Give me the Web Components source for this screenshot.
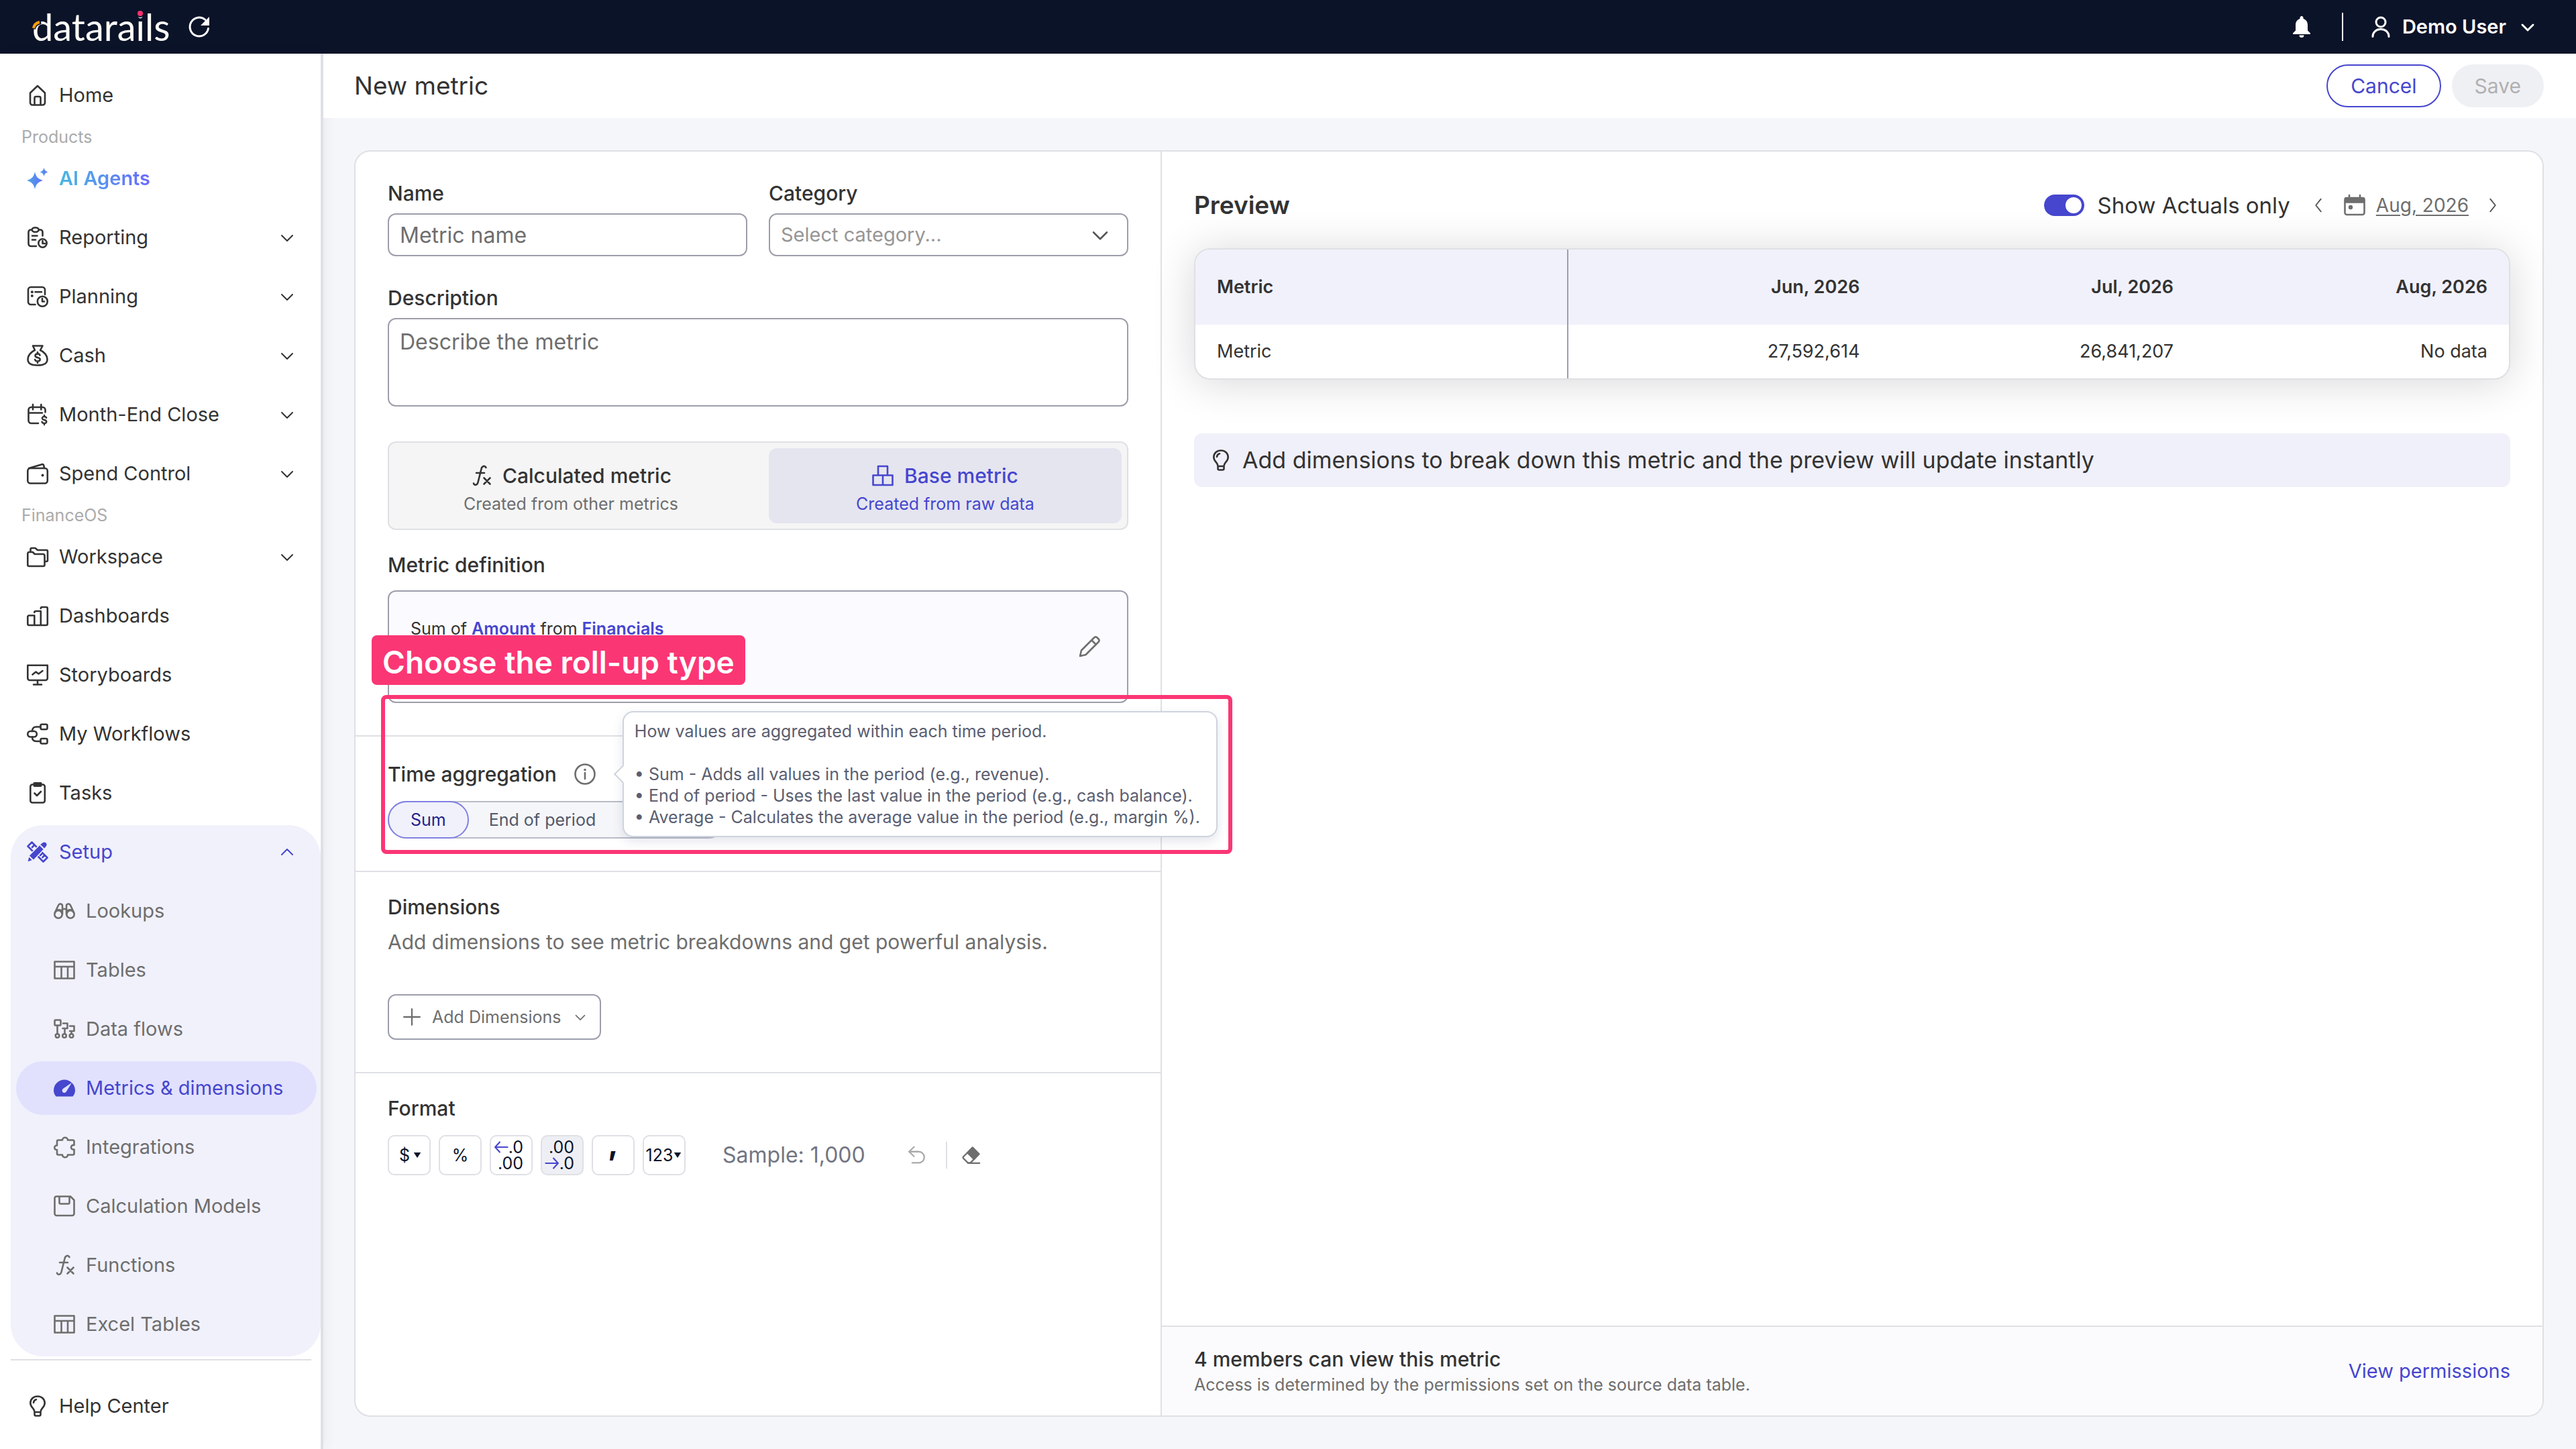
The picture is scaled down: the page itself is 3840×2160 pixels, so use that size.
<!DOCTYPE html>
<html lang="en">
<head>
<meta charset="utf-8">
<title>New metric</title>
<style>
body {
    margin: 0;
    font-family: Inter, "Open Sans", sans-serif;
    font-size: 29px;
    line-height: 40px;
    color: #333333;
    --accent: #4646ce;
    --line: #dfe0e5;
    --field: #9c9eab;
    --muted: #6e6e6e;
}
</style>
</head>
<body>
<app-shell>
    <top-bar slot="top">Demo User</top-bar>
    <side-nav slot="side"></side-nav>
    <page-header>New metric</page-header>
    <metric-card>
        <metric-form slot="form"></metric-form>
        <metric-preview slot="preview"></metric-preview>
    </metric-card>
</app-shell>

<script>
const dollar = "M3.5-3.4C3-5 1.6-5.6 0-5.6c-2 0-3.5 1-3.5 2.8C-3.5 1 3.7-1 3.7 2.8 3.7 4.6 2 5.6 0 5.6c-2 0-3.4-.9-3.9-2.6M0-8v2.4M0 5.6V8";

const icons = {
    home: `<path d="M5 12.500 16 2l11 10.500V27a3.500 3.500 0 0 1-3.500 3.500h-15A3.500 3.500 0 0 1 5 27z"/><path d="M11.500 30V20a2 2 0 0 1 2-2h5a2 2 0 0 1 2 2v10"/>`,
    ai: `<g fill="url(#g)" stroke="none"><path d="M12 6c1.500 7.500 4.500 10.500 12 13-7.500 2.500-10.500 5.500-12 13-1.500-7.500-4.500-10.500-12-13 7.500-2.500 10.500-5.500 12-13z"/><path d="M25.500 0c.8 3.800 2.500 5.200 6 6.500-3.500 1.300-5.200 2.700-6 6.500-.8-3.800-2.500-5.200-6-6.500 3.500-1.300 5.200-2.700 6-6.500z"/></g><defs><linearGradient id="g"><stop stop-color="#4aa6e6"/><stop offset="1" stop-color="#6570f8"/></linearGradient></defs>`,
    reporting: `<path d="M7.500 4.500H6A3.500 3.500 0 0 0 2.500 8v17.500A3.500 3.500 0 0 0 6 29h8M18 4.500h2A3.500 3.500 0 0 1 23.500 8v5.500"/><ellipse cx="12.700" cy="4.500" rx="5" ry="3.300"/><path d="M8 13.500h7.500M8 19.500h5M23.500 21v4h4"/><circle cx="23.500" cy="24.500" r="6.200"/>`,
    planning: `<path d="M12.500 28H6a4 4 0 0 1-4-4V6a4 4 0 0 1 4-4h17a4 4 0 0 1 4 4v7"/><path d="M12.500 9.300H22M23 19v4.500h3"/><circle cx="23.300" cy="23.300" r="7.500"/><g fill="currentColor" stroke="none"><circle cx="7.800" cy="9.300" r="2"/><circle cx="7.800" cy="15" r="2"/></g>`,
    cash: `<path d="M9 1.500h14.500L20 8c6 2.500 10.500 8 10.500 13.500C30.500 28 26 30.500 16 30.500S1.500 28 1.500 21.500C1.500 16 6 10.500 12 8z"/><path transform="translate(16 19)" d="${dollar}"/>`,
    month: `<path d="M17 29H6.500a4 4 0 0 1-4-4V9a4 4 0 0 1 4-4h17a4 4 0 0 1 4 4v3.500M3 13.500h20M9 1v7.500M21.300 1v7.500"/><path transform="translate(26 24) scale(.9)" d="${dollar}"/>`,
    spend: `<rect x="1.300" y="8" width="29.500" height="22.500" rx="4"/><path d="M3 8 22.500 2.200c1.500-.4 2.500.3 2.700 1.500L26 8"/><circle cx="23.500" cy="18.500" r="2" fill="currentColor" stroke="none"/>`,
    workspace: `<path d="M1.300 11A2 2 0 0 1 3.300 9h5.500l3 3H24a2.500 2.500 0 0 1 2.500 2.500V28a2 2 0 0 1-2 2H3.300a2 2 0 0 1-2-2z"/><path d="M5.500 8.500V5a2 2 0 0 1 2-2h5l3.500 3h13a2 2 0 0 1 2 2v13a2 2 0 0 1-2 2h-2"/>`,
    dashboards: `<path d="M1.300 17.500a2 2 0 0 1 2-2h8V30h-8a2 2 0 0 1-2-2zM11.300 11a2 2 0 0 1 2-2h7.500v21h-9.500M20.800 5a2 2 0 0 1 2-2h6a2 2 0 0 1 2 2v23a2 2 0 0 1-2 2h-8"/>`,
    storyboards: `<path d="M1.300 1.800h29.500V21a3 3 0 0 1-3 3H4.300a3 3 0 0 1-3-3zM16 24v6M10 30.500h12M8.500 15.500l5-4 4 3 6-4.500"/>`,
    workflows: `<rect x="1.300" y="12" width="13.500" height="8.500" rx="4"/><rect x="20.500" y="1.800" width="10" height="7.500" rx="2"/><rect x="20.500" y="23" width="10" height="7.500" rx="2"/><path d="M8 12c0-4 2-6.500 6-6.500h6.500M8 20.500c0 4 2 6.500 6 6.500h6.500"/>`,
    tasks: `<rect x="5.300" y="3.500" width="21.500" height="27" rx="3"/><path d="M11 0h10a1.500 1.500 0 0 1 1.500 1.500V5a2 2 0 0 1-2 2h-9a2 2 0 0 1-2-2V1.500A1.500 1.500 0 0 1 11 0z" fill="currentColor" stroke="none"/><path d="m11.500 16.500 3.500 3.500 6-6"/>`,
    setup: `<path d="M1.500 7.500 7.500 1.500 30.500 24.500l-6 6zM8 9l3-3M13 13l2-2M20 21l2-2M23.500 24l3-3"/><path d="M.5 31.500 3 21.500 21.500 3c3-3 5.500-3 7.500-1s2 4.500-1 7.500L10.500 28z" fill="currentColor" stroke="#f1f1fb" stroke-width="1.500"/><path d="m20.500 6.500 5 5M3.500 22.500l6 6" stroke="#f1f1fb" stroke-width="2"/>`,
    lookups: `<circle cx="7" cy="21" r="5.700"/><circle cx="25" cy="21" r="5.700"/><path d="M1.800 18.500 7 7.500c1.500-3 6-2.800 6 1V21M30.200 18.500 25 7.500c-1.500-3-6-2.800-6 1V21M13 13h6M3.500 15.500c3-2 7-1.500 9 1M28.500 15.500c-3-2-7-1.500-9 1"/>`,
    table: `<path d="M1.500 3.500h29v25h-29zM1.500 11h29M11.500 11v17.500M21 11v17.500"/>`,
    flows: `<rect x="1.500" y="2.500" width="9" height="8" rx="1"/><circle cx="5.500" cy="26" r="2.800"/><circle cx="16" cy="26" r="2.800"/><circle cx="26.500" cy="26" r="2.800"/><path d="M5.500 11v12M14 7.500h6.500v7.500h-7M16.500 15v8M24 11.500h6.500v7.500h-6.500M26.500 19v4"/>`,
    gauge: `<path fill="currentColor" stroke="none" fill-rule="evenodd" d="M3.500 28.500C1 25.500 0 22.500 0 19.500a16 16 0 0 1 32 0c0 3-1 6-3.500 9zM27 8 14.500 16.500c-2.200 1.500-2.400 4-1 5.500s4 1.200 5.300-.8z"/>`,
    puzzle: `<path d="M5 7.500a2 2 0 0 1 2-2h6c0-5 8-5 8 0h7.500a2 2 0 0 1 2 2V13c-6-1-6 7.500 0 6.500v6a2 2 0 0 1-2 2H21c0 5-8 5-8 0H7a2 2 0 0 1-2-2v-5.500c-5 .5-5-7 0-6.500z"/>`,
    save: `<path d="M4 1.500h21l5.500 5.500v20a3 3 0 0 1-3 3H4.500a3 3 0 0 1-3-3v-23A2.500 2.500 0 0 1 4 1.500zM8.500 2v9a1.500 1.500 0 0 0 1.500 1.500h12a1.500 1.500 0 0 0 1.500-1.500V2"/>`,
    fx: `<path d="M5 27.500c1 3.500 5.500 3 6.500-1.500L16.500 6c1-4.500 5-5.500 7-2M9 12h12M20.500 19.500l9 9M29.500 19.500l-9 9"/>`,
    bulb: `<path d="M11.500 24.500c0-5-6.200-6.500-6.200-13C5.300 5.500 10 1.500 16 1.500s10.700 4 10.700 10c0 6.500-6.200 8-6.200 13v4a2 2 0 0 1-2 2h-5a2 2 0 0 1-2-2zM11.500 25h9M10 11c.2-2.500 1.700-4.300 4-4.800"/>`,
    boxes: `<path d="M9 2h14v13.500H9zM1.500 15.500H16V30H1.500zM16 15.500h14.500V30H16z"/>`,
    down: `<path d="m8 13 8 8 8-8"/>`,
    up: `<path d="m8 20 8-8 8 8"/>`,
    left: `<path d="m20 6-8 10 8 10"/>`,
    right: `<path d="m12 6 8 10-8 10"/>`,
    bell: `<path fill="currentColor" stroke="none" d="M16 0c1.500 0 2.500 1 2.500 2.400V4C22.500 5 25 8.700 25 13v8.500l4 4V27H3v-1.500l4-4V13c0-4.300 2.500-8 6.500-9V2.400C13.500 1 14.500 0 16 0zM12.500 28.500h7a3.500 3.500 0 0 1-7 0z"/>`,
    user: `<circle cx="16" cy="9" r="7"/><path d="M4 30.500C4 24 9 19.500 16 19.500S28 24 28 30.500"/>`,
    reload: `<path d="M29.500 18.500A13.800 14 0 1 1 25 5.500"/><path fill="currentColor" stroke="none" d="M31 1v13H18z"/>`,
    pencil: `<path d="m2 30 2-8.500L23 2.500c1.500-1.500 3-1.500 4.500 0l2 2c1.500 1.500 1.500 3 0 4.500L10.500 28zM19.500 6.500l6 6"/>`,
    info: `<circle cx="16" cy="16" r="14.500"/><path d="M16 14v9"/><circle cx="16" cy="9.500" r="1.800" fill="currentColor" stroke="none"/>`,
    calendar: `<path d="M1.500 12V8a3 3 0 0 1 3-3h23a3 3 0 0 1 3 3v19a3 3 0 0 1-3 3h-23a3 3 0 0 1-3-3z"/><path fill="currentColor" d="M2 5.500h28v6H2zM8 1v5M24 1v5"/><circle cx="10" cy="19" r="3.200" fill="currentColor" stroke="none"/>`,
    plus: `<path d="M16 2.500v27M2.500 16h27"/>`,
    undo: `<path d="M12 2 3.500 10l8.500 8M4 10h16a9 9 0 0 1 0 19h-11"/>`,
    eraser: `<path d="M10 29 2.500 21.500a2 2 0 0 1 0-3L18 3l11 11-14.500 15zM10 29.500h20"/><path fill="currentColor" d="M18 3l11 11-8.500 9-11-11z"/>`,
    caret: `<path fill="currentColor" stroke="none" d="M4 7h24L16 25z"/>`,
    arrowleft: `<path d="M30 16H3M13 5 3 16l10 11"/>`,
    arrowright: `<path d="M2 16h27M19 5l10 11-10 11"/>`
};

function define(name, html) {
    let t = document.createElement("template");
    t.innerHTML = html;
    customElements.define(name, class extends HTMLElement {
        constructor() {
            super();
            this.attachShadow({mode: "open"}).appendChild(t.content.cloneNode(true));
        }
    });
}

class AppIcon extends HTMLElement {
    constructor() {
        super();
        this.attachShadow({mode: "open"});
    }
    connectedCallback() {
        this.shadowRoot.innerHTML = `
<style>
:host { display: block; flex: none; width: 32px; height: 32px; }
svg {
    display: block;
    width: 100%;
    height: 100%;
    overflow: visible;
    fill: none;
    stroke: currentColor;
    stroke-width: var(--stroke, 2.6);
    stroke-linecap: round;
    stroke-linejoin: round;
}
</style>
<svg viewBox="0 0 32 32" aria-hidden="true">${icons[this.getAttribute("name")]}</svg>`;
    }
}
customElements.define("app-icon", AppIcon);

// One sidebar row. Attributes: icon, chevron (up/down), sub, active, open, ai.
class NavItem extends HTMLElement {
    constructor() {
        super();
        this.attachShadow({mode: "open"});
    }
    connectedCallback() {
        let chevron = this.getAttribute("chevron");
        this.shadowRoot.innerHTML = `
<style>
:host { display: block; }
a {
    display: flex;
    align-items: center;
    gap: 16px;
    height: 80px;
    padding: 0 34px 0 40px;
    color: inherit;
    text-decoration: none;
}
span { flex: 1; white-space: nowrap; }
.chevron { --stroke: 2; }
:host([open]) a { padding-left: 24px; color: var(--accent); }
:host([sub]) a { margin: 0 6px 0 8px; padding: 0 0 0 56px; border-radius: 40px; color: var(--muted); }
:host([sub][active]) a { background: #e1e1fe; color: var(--accent); }
:host([ai]) span {
    flex: none;
    font-weight: 600;
    color: transparent;
    background: linear-gradient(90deg, #4ab8e0, #6a68ff);
    background-clip: text;
}
</style>
<a href="#">
    <app-icon name="${this.getAttribute("icon")}"></app-icon>
    <span><slot></slot></span>
    ${chevron ? `<app-icon class="chevron" name="${chevron}"></app-icon>` : ""}
</a>`;
    }
}
customElements.define("nav-item", NavItem);

define("app-shell", `
<style>
:host {
    display: grid;
    grid-template: auto 1fr / 482px minmax(0, 1fr);
    min-height: 100vh;
    background: #f5f6f9;
}
.top { grid-column: 1 / -1; }
main { display: flex; flex-direction: column; }
</style>
<div class="top"><slot name="top"></slot></div>
<slot name="side"></slot>
<main><slot></slot></main>
`);

define("top-bar", `
<style>
:host {
    display: flex;
    align-items: center;
    height: 80px;
    padding: 0 56px 0 48px;
    background: #0b1329;
    color: #ffffff;
}
.logo {
    position: relative;
    margin-right: 28px;
    color: #fdfdf6;
    font: 400 56px/72px Lato, sans-serif;
}
.logo i { position: relative; font-style: normal; }
.logo i::after {
    content: "";
    position: absolute;
    left: 50%;
    top: 10px;
    width: 8px;
    height: 8px;
    margin-left: -4px;
    border-radius: 50%;
    background: #ff2e6e;
    box-shadow: 0 0 0 2px #0b1329;
}
.logo svg { position: absolute; left: 0; top: 26px; width: 14px; height: 14px; }
.space { flex: 1; }
button {
    display: flex;
    align-items: center;
    gap: 16px;
    padding: 0;
    border: none;
    background: none;
    color: inherit;
    font: 600 29px/40px Inter, sans-serif;
    --stroke: 3;
}
.user { margin-left: 40px; }
hr { width: 2px; height: 42px; margin: 0 0 0 44px; border: none; background: #ffffff; }
</style>
<div class="logo">datara<i>i</i>ls<svg viewBox="0 0 14 14"><path d="M1 13C2 8 6 3 13 2" fill="none" stroke="#0b1329" stroke-width="8"/><path d="M2 12C3 7 6 4 11 3" fill="none" stroke="#ff9f0f" stroke-width="4"/></svg></div>
<button aria-label="Reload"><app-icon name="reload"></app-icon></button>
<div class="space"></div>
<button aria-label="Notifications"><app-icon name="bell"></app-icon></button>
<hr>
<button class="user"><app-icon name="user"></app-icon><slot></slot><app-icon name="down"></app-icon></button>
`);

define("side-nav", `
<style>
:host {
    display: block;
    padding-top: 22px;
    border-right: 4px solid var(--line);
    background: #ffffff;
    box-shadow: 4px 0 16px rgba(40, 50, 100, 0.05);
}
h2 { margin: 0; padding-left: 32px; font-size: 25px; line-height: 44px; font-weight: 400; color: #ababab; }
.rows { display: flex; flex-direction: column; gap: 8px; }
.setup { margin: 8px 0 4px 16px; padding-bottom: 8px; border-radius: 48px; background: #f1f1fb; }
.help { margin: 0 14px 0 16px; padding: 28px 0 20px; border-top: 2px solid var(--line); }
.help nav-item { margin-left: -16px; }
</style>
<nav>
    <nav-item icon="home">Home</nav-item>
    <h2>Products</h2>
    <div class="rows">
        <nav-item icon="ai" ai>AI Agents</nav-item>
        <nav-item icon="reporting" chevron="down">Reporting</nav-item>
        <nav-item icon="planning" chevron="down">Planning</nav-item>
        <nav-item icon="cash" chevron="down">Cash</nav-item>
        <nav-item icon="month" chevron="down">Month-End Close</nav-item>
        <nav-item icon="spend" chevron="down">Spend Control</nav-item>
    </div>
    <h2>FinanceOS</h2>
    <div class="rows">
        <nav-item icon="workspace" chevron="down">Workspace</nav-item>
        <nav-item icon="dashboards">Dashboards</nav-item>
        <nav-item icon="storyboards">Storyboards</nav-item>
        <nav-item icon="workflows">My Workflows</nav-item>
        <nav-item icon="tasks">Tasks</nav-item>
    </div>
    <div class="rows setup">
        <nav-item icon="setup" chevron="up" open>Setup</nav-item>
        <nav-item icon="lookups" sub>Lookups</nav-item>
        <nav-item icon="table" sub>Tables</nav-item>
        <nav-item icon="flows" sub>Data flows</nav-item>
        <nav-item icon="gauge" sub active>Metrics &amp; dimensions</nav-item>
        <nav-item icon="puzzle" sub>Integrations</nav-item>
        <nav-item icon="save" sub>Calculation Models</nav-item>
        <nav-item icon="fx" sub>Functions</nav-item>
        <nav-item icon="table" sub>Excel Tables</nav-item>
    </div>
    <div class="help"><nav-item icon="bulb">Help Center</nav-item></div>
</nav>
`);

define("page-header", `
<style>
:host {
    display: flex;
    align-items: center;
    gap: 16px;
    height: 96px;
    padding: 0 48px 0 46px;
    background: #ffffff;
}
h1 { flex: 1; margin: 0; font-size: 37px; font-weight: 400; }
button {
    height: 64px;
    padding: 0 34px;
    border: 2px solid var(--accent);
    border-radius: 32px;
    background: #ffffff;
    color: var(--accent);
    font: inherit;
    font-size: 30px;
}
button:disabled { padding: 0 32px; border-color: #eff0f4; background: #eff0f4; color: #b0b0b2; }
</style>
<h1><slot></slot></h1>
<button>Cancel</button>
<button disabled>Save</button>
`);

define("metric-card", `
<style>
:host {
    flex: 1;
    display: grid;
    grid-template-columns: minmax(0, 1202fr) minmax(0, 2058fr);
    margin: 48px 48px 48px 46px;
    border: 2px solid var(--line);
    border-radius: 24px;
    background: #ffffff;
}
</style>
<slot name="form"></slot>
<slot name="preview"></slot>
`);

define("info-tip", `
<style>
:host { position: relative; display: block; color: #6e6e6e; }
.tip {
    position: absolute;
    left: 72px;
    top: -78px;
    padding: 12px 24px 12px 16px;
    border: 2px solid #ced4dd;
    border-radius: 16px;
    background: #ffffff;
    box-shadow: 0 6px 16px rgba(60, 70, 110, 0.14);
    color: #5b5e70;
    font-size: 25px;
    line-height: 32px;
    white-space: pre;
}
.tip::before {
    content: "";
    position: absolute;
    left: -11px;
    top: 82px;
    width: 18px;
    height: 18px;
    border: solid #ced4dd;
    border-width: 0 0 2px 2px;
    background: #ffffff;
    transform: rotate(45deg);
}
</style>
<app-icon name="info"></app-icon>
<div class="tip" role="tooltip"><slot></slot></div>
`);

define("call-out", `
<style>
:host { position: absolute; inset: -62px -107px 25px 38px; border: 6px solid #fb3675; border-radius: 8px; pointer-events: none; }
div {
    position: absolute;
    left: -20px;
    top: -95px;
    padding: 12px 16px 6px;
    border-radius: 8px;
    background: #fb3675;
    color: #ffffff;
    font-size: 46px;
    line-height: 56px;
    font-weight: 600;
    white-space: nowrap;
}
</style>
<div><slot></slot></div>
`);

define("format-bar", `
<style>
:host { display: flex; align-items: center; gap: 12px; margin-top: 20px; }
button {
    display: flex;
    align-items: center;
    justify-content: center;
    width: 64px;
    height: 60px;
    padding: 0;
    border: 2px solid var(--line);
    border-radius: 10px;
    background: #ffffff;
    color: #0b1329;
    font: 25px/24px Inter, sans-serif;
}
button.on { background: #eeeff5; }
button app-icon { width: 14px; height: 14px; }
.money { gap: 4px; padding-left: 4px; }
.stack { flex-direction: column; align-items: flex-end; padding-right: 12px; }
.stack span { display: flex; align-items: center; }
.stack app-icon { width: 22px; height: 22px; color: var(--accent); --stroke: 3; }
.comma { font-size: 46px; font-weight: 700; line-height: 24px; padding-bottom: 36px; }
output { margin-left: 43px; color: #727582; font-size: 32px; }
.tool { width: 32px; border: none; color: var(--muted); }
.tool app-icon { width: 28px; height: 28px; }
.tool:disabled { margin-left: 48px; color: #aaaaaa; }
hr { width: 2px; height: 40px; margin: 0 8px 0 16px; border: none; background: var(--line); }
</style>
<button class="money" aria-label="Currency">$<app-icon name="caret"></app-icon></button>
<button>%</button>
<button class="stack" aria-label="Increase decimals"><span><app-icon name="arrowleft"></app-icon>.0</span><span>.00</span></button>
<button class="stack on" aria-label="Decrease decimals"><span>.00</span><span><app-icon name="arrowright"></app-icon>.0</span></button>
<button class="comma" aria-label="Thousands separator">,</button>
<button aria-label="Number scale">123<app-icon name="caret"></app-icon></button>
<output>Sample: 1,000</output>
<button class="tool" disabled aria-label="Undo"><app-icon name="undo"></app-icon></button>
<hr>
<button class="tool" aria-label="Clear format"><app-icon name="eraser"></app-icon></button>
`);

define("metric-form", `
<style>
:host { display: block; position: relative; z-index: 1; border-right: 2px solid var(--line); }
* { box-sizing: border-box; }
section { padding: 32px 48px 48px; border-bottom: 2px solid var(--line); }
section:last-child { border-bottom: none; }
section.basics { padding-top: 42px; }
section.time { position: relative; padding-top: 36px; }
fieldset { display: contents; }
label, h3 { display: block; margin: 0; font-size: 30px; line-height: 40px; font-weight: 500; }
.fields { display: grid; grid-template-columns: 1fr 1fr; gap: 42px 32px; }
.wide { grid-column: 1 / -1; }
input[type=text], select, textarea {
    display: block;
    width: 100%;
    height: 64px;
    margin-top: 10px;
    padding: 0 16px;
    border: 2px solid var(--field);
    border-radius: 12px;
    background: #ffffff;
    color: var(--muted);
    font: 32px/40px Inter, sans-serif;
}
textarea { height: 132px; padding: 14px 16px; resize: none; }
::placeholder { color: var(--muted); opacity: 1; }
.select { display: grid; align-items: center; }
.select > * { grid-area: 1 / 1; }
.select select { appearance: none; color: #969696; font-size: 29px; }
.select app-icon { justify-self: end; margin: 10px 22px 0 0; color: #555555; pointer-events: none; width: 40px; height: 40px; --stroke: 2; }
.kinds {
    display: grid;
    grid-template-columns: 1fr 1fr;
    gap: 32px;
    margin: 52px 0 32px;
    padding: 8px;
    border: 2px solid var(--line);
    border-radius: 12px;
    background: #f5f5f5;
}
.kinds button {
    display: flex;
    flex-direction: column;
    align-items: center;
    height: 112px;
    padding: 20px 0 0;
    border: none;
    border-radius: 12px;
    background: none;
    color: var(--muted);
    font: 25px/42px Inter, sans-serif;
}
.kinds b { display: flex; align-items: center; gap: 16px; color: #333333; font-size: 30px; font-weight: 500; }
.kinds .on, .kinds .on b { color: var(--accent); }
.kinds .on { background: #e5e5f0; }
.definition {
    display: flex;
    justify-content: space-between;
    min-height: 168px;
    margin-top: 18px;
    padding: 36px 40px 36px 32px;
    border: 2px solid var(--field);
    border-radius: 12px;
    background: #fbfbff;
    font-size: 25px;
    line-height: 38px;
}
.definition a { color: var(--accent); font-weight: 600; text-decoration: none; }
.definition button { align-self: center; padding: 0; border: none; background: none; color: var(--muted); }
.head { display: flex; align-items: center; gap: 26px; }
.periods {
    display: inline-flex;
    height: 56px;
    margin-top: 20px;
    border: 2px solid #b9bbc8;
    border-radius: 28px;
    background: #f5f6f9;
    vertical-align: top;
}
.periods label { margin: -2px 0; padding: 8px 32px; border: 2px solid transparent; border-radius: 28px; color: #52586b; font-size: 25px; line-height: 36px; font-weight: 400; }
.periods label:first-child { margin-left: -2px; }
.periods label:nth-child(2) { padding-left: 28px; }
.periods label:last-child { min-width: 160px; }
.periods label:has(:checked) { border-color: #8080e2; background: #f1f1fb; color: #22228c; }
.periods input { position: absolute; opacity: 0; pointer-events: none; }
p { margin: 12px 0 58px; color: var(--muted); font-size: 30px; }
.add {
    display: flex;
    align-items: center;
    gap: 16px;
    height: 68px;
    padding: 0 16px 0 20px;
    border: 2px solid var(--field);
    border-radius: 12px;
    background: #ffffff;
    color: var(--muted);
    font: 25px/40px Inter, sans-serif;
}
.add app-icon { width: 28px; height: 28px; }
.add app-icon:last-child { width: 26px; --stroke: 2; }
</style>
<section class="basics">
    <div class="fields">
        <div><label for="name">Name</label><input id="name" type="text" placeholder="Metric name"></div>
        <div>
            <label for="category">Category</label>
            <div class="select"><select id="category"><option>Select category...</option></select><app-icon name="down"></app-icon></div>
        </div>
        <div class="wide"><label for="description">Description</label><textarea id="description" placeholder="Describe the metric"></textarea></div>
    </div>
    <div class="kinds">
        <button><b><app-icon name="fx"></app-icon>Calculated metric</b>Created from other metrics</button>
        <button class="on"><b><app-icon name="boxes"></app-icon>Base metric</b>Created from raw data</button>
    </div>
    <h3>Metric definition</h3>
    <div class="definition">
        <span>Sum of <a href="#">Amount</a> from <a href="#">Financials</a></span>
        <button aria-label="Edit definition"><app-icon name="pencil"></app-icon></button>
    </div>
</section>
<section class="time">
    <fieldset>
        <div class="head">
            <h3>Time aggregation</h3>
            <info-tip>How values are aggregated within each time period.

• Sum - Adds all values in the period (e.g., revenue).
• End of period - Uses the last value in the period (e.g., cash balance).
• Average - Calculates the average value in the period (e.g., margin %).</info-tip>
        </div>
        <div class="periods">
            <label><input type="radio" name="period" checked>Sum</label>
            <label><input type="radio" name="period">End of period</label>
            <label><input type="radio" name="period" aria-label="Average"></label>
        </div>
    </fieldset>
    <call-out>Choose the roll-up type</call-out>
</section>
<section>
    <h3>Dimensions</h3>
    <p>Add dimensions to see metric breakdowns and get powerful analysis.</p>
    <button class="add"><app-icon name="plus"></app-icon>Add Dimensions<app-icon name="down"></app-icon></button>
</section>
<section>
    <h3>Format</h3>
    <format-bar></format-bar>
</section>
`);

define("metric-preview", `
<style>
:host { display: flex; flex-direction: column; min-width: 0; }
.body { flex: 1; padding: 52px 48px 0; }
.head { display: flex; align-items: center; height: 56px; margin-bottom: 36px; }
h2 { flex: 1; margin: 0; font-size: 37px; font-weight: 600; }
.switch { display: flex; align-items: center; gap: 20px; margin-right: 16px; font-size: 33px; }
.switch input {
    appearance: none;
    display: flex;
    justify-content: flex-end;
    width: 60px;
    height: 32px;
    margin: 0;
    padding: 4px;
    border-radius: 16px;
    background: var(--accent);
    box-sizing: border-box;
}
.switch input::after { content: ""; width: 24px; height: 24px; border-radius: 50%; background: #ffffff; }
.step { width: 52px; padding: 0 10px; border: none; background: none; color: #555555; --stroke: 2; }
.step app-icon { width: 32px; height: 30px; }
.month { display: flex; align-items: center; gap: 16px; margin: 0 10px 0 12px; color: var(--muted); font-size: 28px; text-decoration: none; }
.month span { text-decoration: underline; text-underline-offset: 4px; }
.table {
    overflow: hidden;
    border: 2px solid var(--line);
    border-radius: 24px;
    background: #ffffff;
    box-shadow: 0 4px 64px rgba(0, 0, 0, 0.16);
}
table { width: 100%; table-layout: fixed; border-collapse: collapse; }
th, td { height: 80px; padding: 0 32px; text-align: right; font-size: 27px; line-height: 40px; }
thead th { height: 112px; background: #f1f1fb; font-weight: 600; }
tbody th { font-weight: 400; }
th:first-child { width: 25%; border-right: 2px solid var(--field); text-align: left; }
.hint {
    display: flex;
    align-items: center;
    gap: 16px;
    height: 80px;
    margin-top: 80px;
    padding: 0 24px;
    border-radius: 12px;
    background: #f0f0fa;
    font-size: 34px;
}
footer {
    display: flex;
    align-items: center;
    padding: 28px 48px;
    border-top: 2px solid var(--line);
    border-radius: 0 0 22px 0;
    background: #fbfbfe;
}
footer div { flex: 1; color: var(--muted); font-size: 25px; line-height: 36px; }
footer b { display: block; color: #333333; font-size: 30px; line-height: 40px; font-weight: 500; }
footer a { color: var(--accent); text-decoration: none; }
</style>
<div class="body">
    <div class="head">
        <h2>Preview</h2>
        <label class="switch"><input type="checkbox" role="switch" checked>Show Actuals only</label>
        <button class="step" aria-label="Previous month"><app-icon name="left"></app-icon></button>
        <a class="month" href="#"><app-icon name="calendar"></app-icon><span>Aug, 2026</span></a>
        <button class="step" aria-label="Next month"><app-icon name="right"></app-icon></button>
    </div>
    <div class="table">
        <table>
            <thead><tr><th>Metric</th><th>Jun, 2026</th><th>Jul, 2026</th><th>Aug, 2026</th></tr></thead>
            <tbody><tr><th>Metric</th><td>27,592,614</td><td>26,841,207</td><td>No data</td></tr></tbody>
        </table>
    </div>
    <div class="hint"><app-icon name="bulb"></app-icon>Add dimensions to break down this metric and the preview will update instantly</div>
</div>
<footer>
    <div><b>4 members can view this metric</b>Access is determined by the permissions set on the source data table.</div>
    <a href="#">View permissions</a>
</footer>
`);
</script>
</body>
</html>
